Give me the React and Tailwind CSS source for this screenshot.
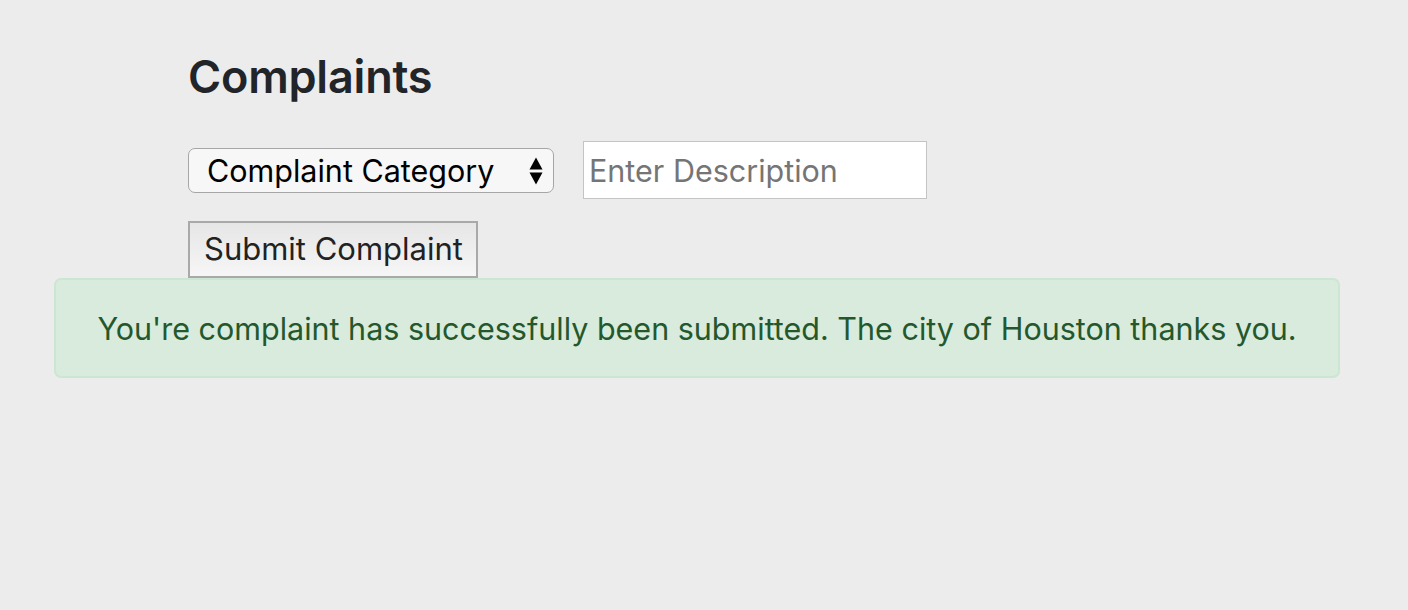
import React from "react";

export default function App() {
  const font = { fontFamily: "Inter, 'Noto Sans', sans-serif" };
  return (
    <div className="w-[1408px] h-[610px] bg-[#ececec] overflow-hidden" style={font}>
      <div className="pl-[188px] pt-[49px]">
        <h2 className="text-[45px] leading-[55px] font-semibold text-[#212529] tracking-[-0.2px]">Complaints</h2>
        <div className="flex items-center gap-[29px] mt-[37px]">
          <div className="relative w-[366px] h-[45px] rounded-[7px] border border-[#a6a6a6] bg-[#f7f7f7] flex items-center pl-[18px] pt-[2px]">
            <span className="text-[30.5px] text-black">Complaint Category</span>
            <svg className="absolute right-[10px] top-[8px]" width="14" height="28" viewBox="0 0 14 28">
              <path d="M7 0.5 L13.5 12.5 L0.5 12.5 Z" fill="#000" />
              <path d="M0.5 15.5 L13.5 15.5 L7 27.5 Z" fill="#000" />
            </svg>
          </div>
          <div className="w-[344px] h-[58px] border border-[#c4c4c4] bg-white flex items-center pl-[5px] pt-[2px]">
            <span className="text-[30.5px] text-[#757575]">Enter Description</span>
          </div>
        </div>
        <div className="mt-[22px] w-[290px] h-[57px] border-2 border-[#a9a9a9] bg-gradient-to-b from-[#e6e6e6] to-[#f6f6f6] flex items-center pl-[14px]">
          <span className="text-[31px] text-[#222]">Submit Complaint</span>
        </div>
      </div>
      <div className="ml-[54px] w-[1286px] h-[100px] rounded-[7px] border-2 border-[#cbe6d1] bg-[#d9ebdc] flex items-center justify-center pt-[2px]">
        <span className="text-[30.5px] text-[#24582c]">You're complaint has successfully been submitted. The city of Houston thanks you.</span>
      </div>
    </div>
  );
}
